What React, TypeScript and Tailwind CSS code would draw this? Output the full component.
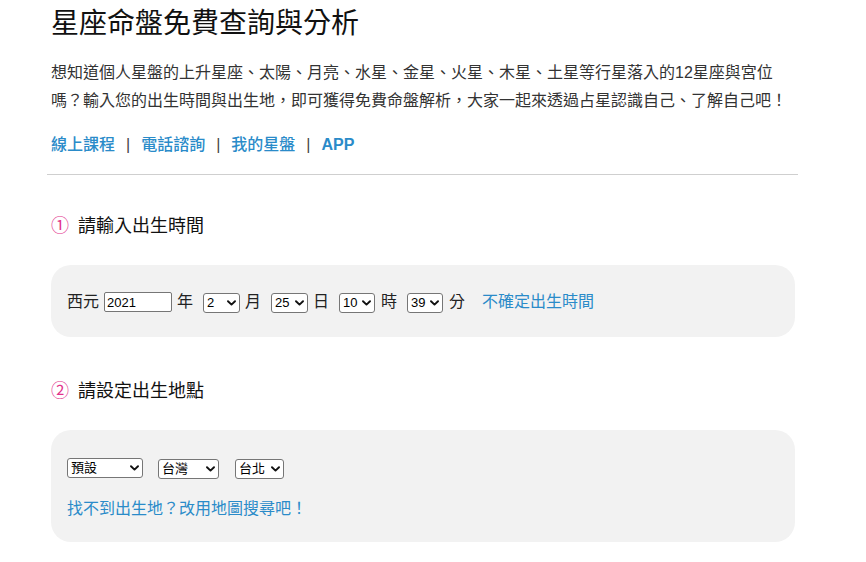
import { useState } from 'react';

const FONT = { fontFamily: '"Liberation Sans", "Noto Sans CJK TC", sans-serif' };

interface SelectProps {
  value: string;
  options: string[];
  width: string;
  onChange: (v: string) => void;
}

function Chevron() {
  return (
    <svg className="pointer-events-none absolute right-[4px] top-1/2 -translate-y-1/2" width="9" height="6" viewBox="0 0 9 6" fill="none">
      <path d="M1 1.2L4.5 4.6L8 1.2" stroke="#111" strokeWidth="1.9" strokeLinecap="round" strokeLinejoin="round" />
    </svg>
  );
}

function Select({ value, options, width, onChange }: SelectProps) {
  return (
    <span className="relative inline-flex">
      <select
        value={value}
        onChange={(e) => onChange(e.target.value)}
        className={`${width} h-[20px] appearance-none rounded-[3px] border border-[#767676] bg-white pl-[3px] pr-[14px] text-[13px] leading-[18px] text-black outline-none`}
        style={FONT}
      >
        {options.map((o) => (
          <option key={o} value={o}>{o}</option>
        ))}
      </select>
      <Chevron />
    </span>
  );
}

const range = (from: number, to: number) => Array.from({ length: to - from + 1 }, (_, i) => String(from + i));

export default function App() {
  const [year, setYear] = useState('2021');
  const [month, setMonth] = useState('2');
  const [day, setDay] = useState('25');
  const [hour, setHour] = useState('10');
  const [minute, setMinute] = useState('39');
  const [region, setRegion] = useState('預設');
  const [country, setCountry] = useState('台灣');
  const [city, setCity] = useState('台北');

  return (
    <div className="min-h-[562px] bg-white text-[#222]" style={FONT}>
      <div className="ml-[47px] w-[751px]">
        {/* Header */}
        <div className="pl-1 pr-1">
          <h1 className="pt-[3px] text-[28px] leading-[42px] text-[#111]">星座命盤免費查詢與分析</h1>
          <p className="mt-[14px] text-[16px] leading-[28px] text-[#333]">
            想知道個人星盤的上升星座、太陽、月亮、水星、金星、火星、木星、土星等行星落入的12星座與宮位嗎？輸入您的出生時間與出生地，即可獲得免費命盤解析，大家一起來透過占星認識自己、了解自己吧！
          </p>
          <nav className="mt-[16px] flex items-center text-[16px] font-medium leading-[28px] text-[#2a8bc9]">
            <a href="#">線上課程</a>
            <span className="mx-[11px] font-normal text-[#444]">|</span>
            <a href="#">電話諮詢</a>
            <span className="mx-[11px] font-normal text-[#444]">|</span>
            <a href="#">我的星盤</a>
            <span className="mx-[11px] font-normal text-[#444]">|</span>
            <a href="#" className="font-bold">APP</a>
          </nav>
        </div>

        <hr className="mt-[15px] border-t border-[#cfcfcf]" />

        {/* Step 1 */}
        <div className="pl-1 pr-[3px]">
          <h2 className="mt-[38px] flex items-center text-[18px] leading-[27px] text-[#111]">
            <span className="mr-[9px] text-[#e2338c]">①</span>
            請輸入出生時間
          </h2>
          <div className="mt-[25px] flex h-[72px] items-center rounded-[20px] bg-[#f2f2f2] px-4 pt-[2px] text-[16px] text-[#222]">
            <span>西元</span>
            <input
              value={year}
              onChange={(e) => setYear(e.target.value)}
              className="ml-[5px] h-[20px] w-[68px] rounded-[2px] border border-[#767676] bg-white px-[2px] text-[13px] text-black outline-none"
              style={FONT}
            />
            <span className="ml-[5px]">年</span>
            <span className="ml-[10px]"><Select value={month} options={range(1, 12)} width="w-[37px]" onChange={setMonth} /></span>
            <span className="ml-[5px]">月</span>
            <span className="ml-[10px]"><Select value={day} options={range(1, 31)} width="w-[37px]" onChange={setDay} /></span>
            <span className="ml-[5px]">日</span>
            <span className="ml-[10px]"><Select value={hour} options={range(0, 23)} width="w-[36px]" onChange={setHour} /></span>
            <span className="ml-[6px]">時</span>
            <span className="ml-[10px]"><Select value={minute} options={range(0, 59)} width="w-[36px]" onChange={setMinute} /></span>
            <span className="ml-[6px]">分</span>
            <a href="#" className="ml-[17px] text-[#2a8bc9]">不確定出生時間</a>
          </div>

          {/* Step 2 */}
          <h2 className="mt-[41px] flex items-center text-[18px] leading-[27px] text-[#111]">
            <span className="mr-[9px] text-[#e2338c]">②</span>
            請設定出生地點
          </h2>
          <div className="mt-[25px] flex h-[112px] flex-col justify-center gap-[19px] rounded-[20px] bg-[#f2f2f2] px-4 pt-[2px]">
            <div className="flex items-center">
              <Select value={region} options={['預設', '亞洲', '歐洲', '美洲']} width="w-[76px]" onChange={setRegion} />
              <span className="ml-[15px]"><Select value={country} options={['台灣', '香港', '中國']} width="w-[61px]" onChange={setCountry} /></span>
              <span className="ml-[16px]"><Select value={city} options={['台北', '台中', '高雄']} width="w-[49px]" onChange={setCity} /></span>
            </div>
            <a href="#" className="text-[16px] leading-[20px] text-[#2a8bc9]">找不到出生地？改用地圖搜尋吧！</a>
          </div>
        </div>
      </div>
    </div>
  );
}
